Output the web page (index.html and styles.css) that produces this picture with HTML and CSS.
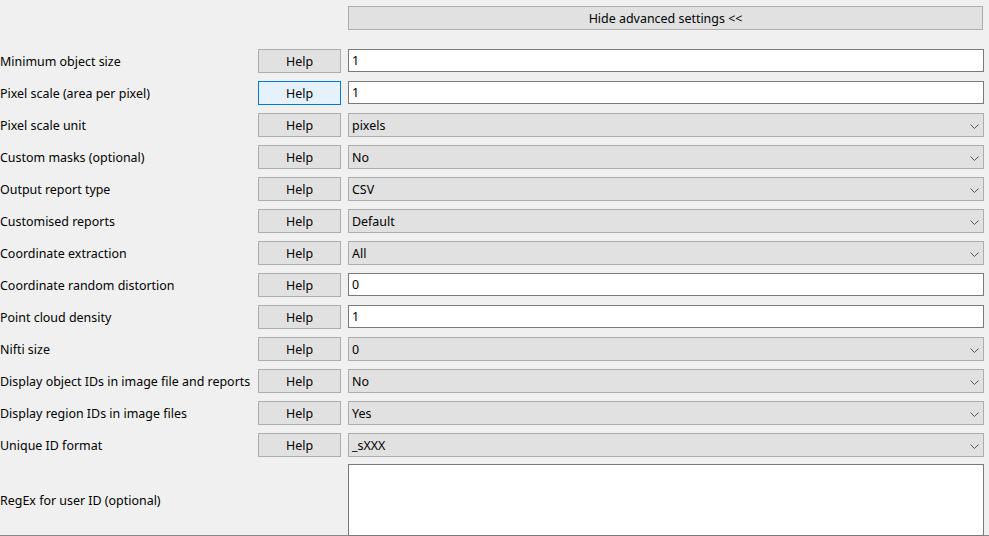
FILE: index.html
```html
<!DOCTYPE html>
<html>
<head>
<meta charset="utf-8">
<link rel="stylesheet" href="styles.css">
</head>
<body>
<div class="page">
  <div class="top">
    <button class="wide-btn">Hide advanced settings &lt;&lt;</button>
  </div>
  <div class="form">
    <div class="label">Minimum object size</div>
    <button class="help">Help</button>
    <div class="text">1</div>

    <div class="label">Pixel scale (area per pixel)</div>
    <button class="help hot">Help</button>
    <div class="text">1</div>

    <div class="label">Pixel scale unit</div>
    <button class="help">Help</button>
    <div class="combo">pixels<svg class="chev" width="9" height="5" viewBox="0 0 9 5"><path d="M0.5 0.5 L4.5 4.5 L8.5 0.5" fill="none" stroke="#555" stroke-width="1"/></svg></div>

    <div class="label">Custom masks (optional)</div>
    <button class="help">Help</button>
    <div class="combo">No<svg class="chev" width="9" height="5" viewBox="0 0 9 5"><path d="M0.5 0.5 L4.5 4.5 L8.5 0.5" fill="none" stroke="#555" stroke-width="1"/></svg></div>

    <div class="label">Output report type</div>
    <button class="help">Help</button>
    <div class="combo">CSV<svg class="chev" width="9" height="5" viewBox="0 0 9 5"><path d="M0.5 0.5 L4.5 4.5 L8.5 0.5" fill="none" stroke="#555" stroke-width="1"/></svg></div>

    <div class="label">Customised reports</div>
    <button class="help">Help</button>
    <div class="combo">Default<svg class="chev" width="9" height="5" viewBox="0 0 9 5"><path d="M0.5 0.5 L4.5 4.5 L8.5 0.5" fill="none" stroke="#555" stroke-width="1"/></svg></div>

    <div class="label">Coordinate extraction</div>
    <button class="help">Help</button>
    <div class="combo">All<svg class="chev" width="9" height="5" viewBox="0 0 9 5"><path d="M0.5 0.5 L4.5 4.5 L8.5 0.5" fill="none" stroke="#555" stroke-width="1"/></svg></div>

    <div class="label">Coordinate random distortion</div>
    <button class="help">Help</button>
    <div class="text">0</div>

    <div class="label">Point cloud density</div>
    <button class="help">Help</button>
    <div class="text">1</div>

    <div class="label">Nifti size</div>
    <button class="help">Help</button>
    <div class="combo">0<svg class="chev" width="9" height="5" viewBox="0 0 9 5"><path d="M0.5 0.5 L4.5 4.5 L8.5 0.5" fill="none" stroke="#555" stroke-width="1"/></svg></div>

    <div class="label">Display object IDs in image file and reports</div>
    <button class="help">Help</button>
    <div class="combo">No<svg class="chev" width="9" height="5" viewBox="0 0 9 5"><path d="M0.5 0.5 L4.5 4.5 L8.5 0.5" fill="none" stroke="#555" stroke-width="1"/></svg></div>

    <div class="label">Display region IDs in image files</div>
    <button class="help">Help</button>
    <div class="combo">Yes<svg class="chev" width="9" height="5" viewBox="0 0 9 5"><path d="M0.5 0.5 L4.5 4.5 L8.5 0.5" fill="none" stroke="#555" stroke-width="1"/></svg></div>

    <div class="label">Unique ID format</div>
    <button class="help">Help</button>
    <div class="combo">_sXXX<svg class="chev" width="9" height="5" viewBox="0 0 9 5"><path d="M0.5 0.5 L4.5 4.5 L8.5 0.5" fill="none" stroke="#555" stroke-width="1"/></svg></div>

    <div class="label label-tall">RegEx for user ID (optional)</div>
    <div class="blank"></div>
    <div class="area"></div>
  </div>
</div>
</body>
</html>
```
FILE: styles.css
```css
html, body {
  margin: 0;
  padding: 0;
  background: #f0f0f0;
}
body {
  width: 989px;
  height: 536px;
  overflow: hidden;
  font-family: "Noto Sans", "Open Sans", sans-serif;
  font-size: 12.45px;
  color: #000;
}
.page {
  height: 535px;
  border-bottom: 1px solid #8a8a8a;
  box-sizing: content-box;
}
.top {
  padding-top: 6px;
  padding-left: 348px;
  padding-right: 6px;
  margin-bottom: 19px;
}
.wide-btn {
  display: block;
  width: 635px;
  height: 24px;
  margin: 0;
  padding: 0;
  background: #e1e1e1;
  border: 1px solid #adadad;
  font: inherit;
  color: #000;
}
.form {
  display: grid;
  grid-template-columns: 251px 83px 636px;
  column-gap: 7px;
  row-gap: 8px;
  grid-auto-rows: 24px;
}
.label {
  display: flex;
  align-items: center;
  white-space: nowrap;
  padding-left: 0;
}
.help {
  margin: 0;
  padding: 0;
  height: 24px;
  background: #e1e1e1;
  border: 1px solid #adadad;
  font: inherit;
  color: #000;
}
.help.hot {
  background: #e5f1fb;
  border-color: #0078d7;
}
.text {
  box-sizing: border-box;
  height: 23px;
  background: #fff;
  border: 1px solid #7a7a7a;
  padding-left: 3px;
  display: flex;
  align-items: center;
}
.combo {
  box-sizing: border-box;
  height: 24px;
  background: #e1e1e1;
  border: 1px solid #adadad;
  padding-left: 3px;
  padding-right: 4px;
  display: flex;
  align-items: center;
  justify-content: space-between;
}
.chev {
  display: block;
  margin-top: 2px;
}
.label-tall {
  margin-top: -2px;
}
.form > .label-tall, .form > .blank, .form > .area {
  height: 72px;
  margin-top: -1px;
}
.area {
  box-sizing: border-box;
  background: #fff;
  border: 1px solid #7a7a7a;
}
```
